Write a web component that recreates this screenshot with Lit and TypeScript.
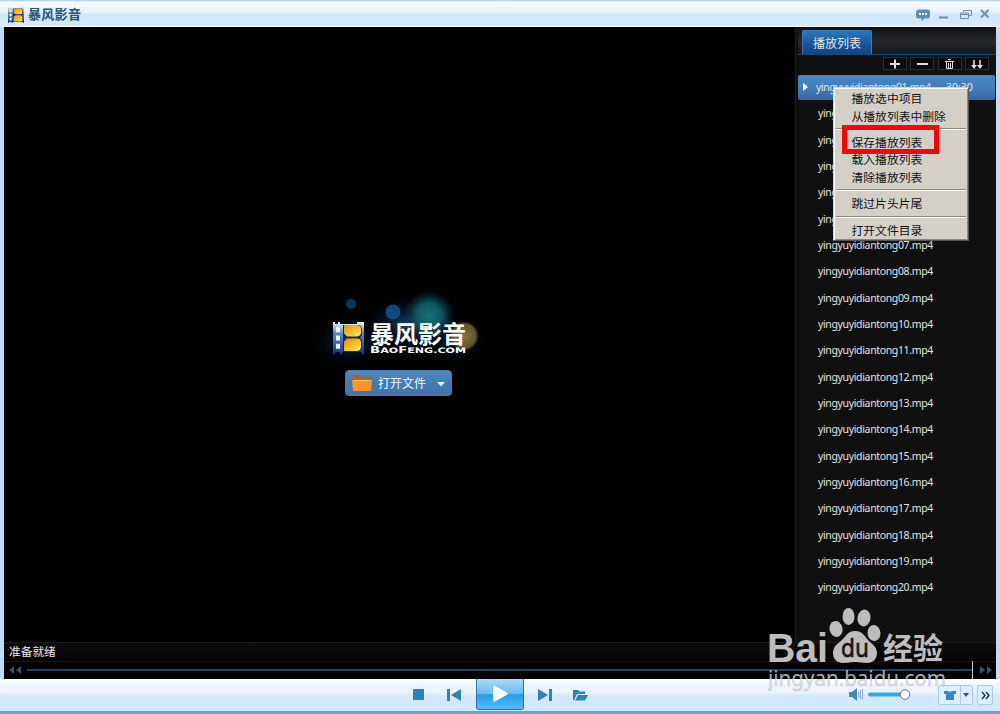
import { css, html, LitElement, svg } from "lit";
import { customElement, property } from "lit/decorators.js";

const filmLogo = svg`
  <defs>
    <linearGradient id="strip" x1="0" y1="0" x2="0" y2="1">
      <stop offset="0" stop-color="#e9f4f8" />
      <stop offset=".35" stop-color="#5b8db4" />
      <stop offset="1" stop-color="#16359a" />
    </linearGradient>
    <linearGradient id="gold" x1="0" y1="0" x2="1" y2="1">
      <stop offset="0" stop-color="#f08c0a" />
      <stop offset=".6" stop-color="#ffc629" />
      <stop offset="1" stop-color="#fff08a" />
    </linearGradient>
  </defs>
  <path d="M0 0h2v2h3V0h2v2h17V0h7v31h-2v-2H9v2H7v-2H2v2H0z" fill="url(#strip)" />
  <path d="M10 3h17l2 3v7l-2 2 2 3v8l-3 3H10z" fill="#10275e" />
  <path d="M3 5h4v5H3zM3 13h4v5H3zM3 21h4v5H3z" fill="#eef8ff" />
  <path d="M11 3h13q4 0 4 4v3q0 4-4 4H14l-3-3z" fill="url(#gold)" />
  <path d="M14 16h10q4 0 4 4v4q0 4-4 4H11v-9z" fill="url(#gold)" />
`;

@customElement("film-logo")
export class FilmLogo extends LitElement {
  render() {
    return html`<svg viewBox="0 0 31 31" preserveAspectRatio="none">
      ${filmLogo}
    </svg>`;
  }

  static styles = css`
    :host {
      display: block;
    }

    svg {
      display: block;
      width: 100%;
      height: 100%;
    }
  `;
}

@customElement("title-bar")
export class TitleBar extends LitElement {
  render() {
    return html`
      <film-logo class="logo"></film-logo>
      <span class="name">暴风影音</span>
      <svg class="controls" width="76" height="16" fill="none" stroke="#6790b5">
        <path
          d="M3 3h10q1.500 0 1.500 1.500v5q0 1.500-1.500 1.500H9l-2 2.500V11H3q-1.500 0-1.500-1.500v-5Q1.500 3 3 3z"
          fill="#5f8bb5"
        />
        <path d="M4 6h2v2H4zM7 6h2v2H7zM10 6h2v2h-2z" fill="#fff" stroke="none" />
        <path d="M24 10.500h9" stroke-width="2" />
        <path d="M48.500 5.500V3.500h8v5H54M45.500 6h8v5.500h-8zM46 7.500h7" />
        <path d="M66 3l7.500 7.500M73.500 3l-7.500 7.500" stroke-width="1.900" />
      </svg>
    `;
  }

  static styles = css`
    :host {
      display: flex;
      align-items: flex-start;
      box-sizing: border-box;
      height: 27px;
      padding: 7px 9px 0 8px;
      border-bottom: 1px solid #f6fbff;
      background: linear-gradient(#9fc8e8 0, #f7fbff 2px, #e9f3fd 12px, #cfe6fa 14px, #d5eafc 100%);
    }

    .logo {
      width: 16px;
      height: 16px;
    }

    .name {
      margin-left: 4px;
      font: bold 13px/14px "Noto Sans CJK SC", sans-serif;
      color: #245681;
      letter-spacing: 0.3px;
    }

    .controls {
      margin-left: auto;
    }
  `;
}

@customElement("video-stage")
export class VideoStage extends LitElement {
  render() {
    return html`
      <div class="brand">
        <svg class="glow" width="200" height="100">
          <defs>
            <radialGradient id="teal">
              <stop offset="0" stop-color="#167078" />
              <stop offset=".5" stop-color="#0f5560" />
              <stop offset="1" stop-color="#0a3440" stop-opacity="0" />
            </radialGradient>
            <radialGradient id="navy">
              <stop offset="0" stop-color="#0c4a98" />
              <stop offset="1" stop-color="#000" stop-opacity="0" />
            </radialGradient>
            <radialGradient id="amber">
              <stop offset="0" stop-color="#80733d" />
              <stop offset=".75" stop-color="#5e5530" />
              <stop offset="1" stop-color="#000" stop-opacity="0" />
            </radialGradient>
          </defs>
          <ellipse cx="45" cy="57" rx="42" ry="30" fill="url(#navy)" opacity=".5" />
          <ellipse cx="102" cy="40" rx="44" ry="32" fill="url(#navy)" opacity=".85" />
          <ellipse cx="150" cy="56" rx="38" ry="28" fill="url(#navy)" opacity=".4" />
          <circle cx="126" cy="31" r="26" fill="url(#teal)" />
          <circle cx="48" cy="19" r="5" fill="#0c3657" />
          <circle cx="90" cy="27" r="7.500" fill="#11487d" />
          <circle cx="161" cy="51" r="16" fill="url(#amber)" />
        </svg>
        <film-logo class="logo"></film-logo>
        <div class="words">
          <span class="cn">暴风影音</span>
          <svg class="latin" width="98" height="10">
            <text y="8" textLength="96" lengthAdjust="spacingAndGlyphs">
              B<tspan class="small">AO</tspan>F<tspan class="small">ENG.COM</tspan>
            </text>
          </svg>
        </div>
      </div>
      <div class="open">
        <svg width="21" height="18">
          <path d="M0 1h8l2 2h10v4H0z" fill="#ae6425" />
          <path d="M1 6h18l1 1-1 10H1L0 7z" fill="#f8952b" />
          <path d="M1 6.500h18" stroke="#ffbd65" />
        </svg>
        <span class="label">打开文件</span>
        <svg class="arrow" width="8" height="5"><path d="M0 0h8L4 4.500z" fill="#e5f4ff" /></svg>
      </div>
    `;
  }

  static styles = css`
    :host {
      display: flex;
      flex: 1;
      flex-direction: column;
      align-items: flex-start;
      padding: 295px 0 0 329px;
      background: #000;
      font-family: "Noto Sans CJK SC", sans-serif;
    }

    .brand {
      position: relative;
      display: flex;
      width: 136px;
      height: 35px;
    }

    .glow {
      position: absolute;
      left: -30px;
      top: -37px;
    }

    .logo {
      position: relative;
      width: 31px;
      height: 32px;
    }

    .words {
      position: relative;
      margin: 0 0 0 6px;
      color: #fff;
    }

    .cn {
      display: block;
      height: 23px;
      font-size: 24px;
      font-weight: bold;
      line-height: 21px;
      white-space: nowrap;
    }

    .latin {
      display: block;
      fill: #fff;
      font: bold 9px "DejaVu Sans", sans-serif;
    }

    .small {
      font-size: 7.500px;
    }

    .open {
      display: flex;
      align-items: center;
      box-sizing: border-box;
      width: 107px;
      height: 26px;
      margin: 13px 0 0 12px;
      padding: 0 6px;
      border: 1px solid #4b7dad;
      border-radius: 4px;
      background: linear-gradient(#5089c0, #437bb3 50%, #4674a8);
    }

    .label {
      margin-left: 5px;
      color: #f2f8ff;
      font-size: 12px;
      line-height: 20px;
    }

    .arrow {
      margin: 2px 0 0 auto;
    }
  `;
}

@customElement("play-list")
export class PlayList extends LitElement {
  @property({ type: Number })
  count = 20;

  render() {
    const names = Array.from(
      { length: this.count },
      (_, i) => `yingyuyidiantong${String(i + 1).padStart(2, "0")}.mp4`
    );
    return html`
      <div class="tabs"><div class="tab">播放列表</div></div>
      <div class="tools">
        ${[
          svg`<path d="M7 6h10M12 1.500v9" stroke-width="2" />`,
          svg`<path d="M7 6h11" stroke-width="2" />`,
          svg`<path d="M7 3.500h9M10 1.500h3M8.500 4v6.500h6V4M10.500 5v5M12.500 5v5" />`,
          svg`<path d="M9 2v7M15 2v7" stroke-width="1.600" /><path d="M6 7h6l-3 4zM12 7h6l-3 4z" fill="#ddd" stroke="none" />`,
        ].map(
          (icon) => html`<div class="tool">
            <svg width="24" height="12" fill="none" stroke="#ddd">${icon}</svg>
          </div>`
        )}
      </div>
      <div class="rows">
        ${names.map((name, i) =>
          i === 0
            ? html`<div class="row current">
                <svg width="5" height="8"><path d="M0 0l5 4-5 4z" fill="#fff" /></svg>
                <span class="file">${name}</span><span class="time">30:30</span>
              </div>`
            : html`<div class="row">${name}</div>`
        )}
      </div>
    `;
  }

  static styles = css`
    :host {
      display: flex;
      flex-direction: column;
      box-sizing: border-box;
      width: 201px;
      border-left: 1px solid #202020;
      padding-left: 2px;
      background: #101010;
      color: #e4e4e4;
    }

    .tabs {
      display: flex;
      align-items: flex-end;
      box-sizing: border-box;
      height: 28px;
      padding-left: 4px;
      border-bottom: 1px solid #174578;
      background: linear-gradient(#101114, #25272a 55%, #17181b);
    }

    .tab {
      box-sizing: border-box;
      width: 70px;
      height: 24px;
      border: 1px solid #3c78b4;
      border-bottom: 0;
      border-radius: 2px 2px 0 0;
      background: linear-gradient(#2a77bd, #135497 60%, #0d478a);
      font: 12px/23px "Noto Sans CJK SC", sans-serif;
      text-align: center;
    }

    .tools {
      display: flex;
      justify-content: flex-end;
      gap: 3.500px;
      box-sizing: border-box;
      height: 19px;
      padding: 2px 7px 0 0;
    }

    .tool {
      box-sizing: border-box;
      width: 24px;
      height: 13px;
      border: 1px solid #2d2d2d;
      background: #0b0b0b;
    }

    .tool svg {
      display: block;
      margin-left: -1px;
    }

    .rows {
      font: 10.500px "Noto Sans", sans-serif;
      letter-spacing: -0.350px;
    }

    .row {
      display: flex;
      align-items: center;
      box-sizing: border-box;
      height: 26.340px;
      padding-left: 20px;
      white-space: nowrap;
    }

    .current {
      height: 25px;
      margin: 0.700px 1px 0.600px 0;
      padding-left: 5px;
      border-radius: 2px;
      background: linear-gradient(#4286c4, #427fba 50%, #3468a2);
    }

    .file {
      margin-left: 8px;
    }

    .time {
      margin-left: 15px;
      letter-spacing: 0;
    }
  `;
}

@customElement("context-menu")
export class ContextMenu extends LitElement {
  render() {
    const groups = [
      ["播放选中项目", "从播放列表中删除"],
      ["保存播放列表", "载入播放列表", "清除播放列表"],
      ["跳过片头片尾"],
      ["打开文件目录"],
    ];
    return html`
      ${groups.map(
        (group) => html`<div class="group">
          ${group.map((label) => html`<div class="item">${label}</div>`)}
        </div>`
      )}
      <div class="mark"></div>
    `;
  }

  static styles = css`
    :host {
      display: block;
      box-sizing: border-box;
      width: 136px;
      height: 154px;
      padding: 1px 2px;
      border: 1px solid #d4d0c8;
      border-right-color: #555;
      border-bottom-color: #555;
      background: #d4d0c8;
      box-shadow: inset 1px 1px #fff, inset -1px -1px #8b8882;
      color: #111;
      font: 11.800px/17.600px "Noto Sans CJK SC", sans-serif;
    }

    .group + .group {
      margin-top: 3.700px;
      padding-top: 4px;
      border-top: 1px solid #8b8882;
      box-shadow: inset 0 1px #fff;
    }

    .item {
      height: 17.600px;
      padding-left: 15.500px;
      white-space: nowrap;
    }

    .mark {
      position: absolute;
      left: 8px;
      top: 37px;
      box-sizing: border-box;
      width: 97px;
      height: 29px;
      border: 5px solid #f00;
    }
  `;
}

@customElement("status-area")
export class StatusArea extends LitElement {
  render() {
    return html`
      <div class="status">准备就绪</div>
      <div class="seek">
        <svg width="12" height="8"><path d="M5 0v8L0 4zM12 0v8L7 4z" /></svg>
        <div class="track"></div>
        <svg width="12" height="8"><path d="M0 0l5 4-5 4zM7 0l5 4-5 4z" /></svg>
      </div>
    `;
  }

  static styles = css`
    :host {
      display: block;
      height: 37px;
      background: #000;
    }

    .status {
      box-sizing: border-box;
      height: 20px;
      padding-left: 5px;
      border-top: 1px solid #1c1c1c;
      border-bottom: 1px solid #171717;
      background: linear-gradient(#0d0d0d, #030303);
      color: #e8e8e8;
      font: 11.700px/16px "Noto Sans CJK SC", sans-serif;
    }

    .seek {
      display: flex;
      align-items: center;
      height: 16px;
      padding: 0 4px 0 5px;
      fill: #34516c;
    }

    .track {
      flex: 1;
      height: 2px;
      margin: 0 8px 0 6px;
      background: #29405a;
    }
  `;
}

@customElement("control-bar")
export class ControlBar extends LitElement {
  render() {
    return html`
      <div class="transport">
        <svg width="12" height="12"><path d="M0 0h11v11H0z" /></svg>
        <svg width="15" height="14"><path d="M0 1h3v12H0zM14 1v12L4 7z" /></svg>
        <div class="play">
          <svg width="16" height="18"><path d="M1 1.500Q1 0 2.500.8l12.500 7q1 1 0 2l-12.500 7Q1 17.500 1 16z" fill="#fff" /></svg>
        </div>
        <svg width="15" height="14"><path d="M0 1l10 6-10 6zM11 1h3v12h-3z" /></svg>
        <svg width="15" height="12">
          <path d="M0 1h5l1.500 1.500H12V5H4l-3 6H0zM5 6h10l-3 5.500H2z" />
        </svg>
      </div>
      <svg class="volume" width="64" height="16">
        <path d="M0 5h3l5-4v13l-5-4H0z" fill="#4588bc" />
        <path d="M9.500 5v5M11.500 3v9M13.500 2v11" stroke="#8bafd0" />
        <path d="M21 7.500h33" stroke="#3aa5e8" stroke-width="4" stroke-linecap="round" />
        <circle cx="56" cy="7.500" r="4.800" fill="#fff" stroke="#667582" />
      </svg>
      <div class="skin">
        <svg width="12" height="9"><path d="M0 0h4q2 1.500 4 0h4v3h-2v6H2V3H0z" fill="#3887c1" /></svg>
        <div class="drop">
          <svg width="6" height="4"><path d="M0 0h6L3 4z" fill="#344f72" /></svg>
        </div>
      </div>
      <div class="more">
        <svg width="9" height="9" fill="none" stroke="#203952" stroke-width="1.500">
          <path d="M1 1l3 3.500-3 3.500M5 1l3 3.500-3 3.500" />
        </svg>
      </div>
    `;
  }

  static styles = css`
    :host {
      display: grid;
      grid-template-columns: 1fr auto auto auto;
      align-items: center;
      box-sizing: border-box;
      height: 32px;
      padding-right: 7px;
      background: linear-gradient(#fff 0, #edf4fe 7px, #e8f2fe 14px, #d3e8fe 17px, #d0e8ff 100%);
    }

    .transport {
      display: flex;
      align-items: center;
      height: 32px;
      padding-left: 413px;
      fill: #2b83bd;
    }

    .transport > svg:nth-child(2) {
      margin: 0 14px 0 22px;
    }

    .play {
      display: flex;
      align-items: center;
      justify-content: center;
      box-sizing: border-box;
      width: 48px;
      height: 31px;
      margin-bottom: 1px;
      border: 1px solid #2b75af;
      border-top: 0;
      border-radius: 0 0 3px 3px;
      background: linear-gradient(#a7dcfb, #69bced 50%, #299be6 52%, #54bcfb);
    }

    .play + svg {
      margin: 0 20px 0 14px;
    }

    .volume {
      margin-right: 25px;
    }

    .skin,
    .more {
      display: flex;
      align-items: center;
      box-sizing: border-box;
      height: 20px;
      border: 1px solid #a9cdea;
      border-radius: 2px;
      background: #dceeff;
    }

    .skin {
      width: 35px;
      padding-left: 5px;
    }

    .drop {
      display: flex;
      align-items: center;
      justify-content: center;
      width: 12px;
      height: 18px;
      margin-left: 4px;
      border-left: 1px solid #a9cdea;
    }

    .more {
      justify-content: center;
      width: 16px;
      margin-left: 4px;
    }
  `;
}

@customElement("baidu-watermark")
export class BaiduWatermark extends LitElement {
  render() {
    return html`<svg width="200" height="90">
      <g fill="#bdbdbd">
        <text class="bai" x="-1" y="57" textLength="61" lengthAdjust="spacingAndGlyphs">Bai</text>
        <ellipse cx="68" cy="24" rx="6.500" ry="8" transform="rotate(-12 68 24)" />
        <ellipse cx="80.500" cy="11.500" rx="6" ry="8.500" />
        <ellipse cx="96" cy="13" rx="6.500" ry="8.500" transform="rotate(10 96 13)" />
        <ellipse cx="106" cy="28" rx="6.500" ry="8" transform="rotate(-5 106 28)" />
        <path
          d="M87 26c-7 0-9 5-13 9-5 4-9 7-9 13 0 6 4 10 10 10 5 0 8-1 12-1s8 1 12 1c6 0 10-4 10-10 0-6-5-9-9-13-4-5-6-9-13-9z"
        />
        <text class="du" x="73" y="52" textLength="28" lengthAdjust="spacingAndGlyphs">du</text>
        <text class="cn" x="115" y="54" textLength="60" lengthAdjust="spacingAndGlyphs">经验</text>
      </g>
      <text class="url" x="0" y="81" textLength="178" lengthAdjust="spacingAndGlyphs">
        jingyan.baidu.com
      </text>
    </svg>`;
  }

  static styles = css`
    svg {
      display: block;
    }

    .bai {
      font: bold 40px "Liberation Sans", sans-serif;
    }

    .du {
      fill: #151515;
      font: 24px "DejaVu Sans", sans-serif;
      stroke: #151515;
      stroke-width: 0.6px;
    }

    .cn {
      font: bold 30px "Noto Sans CJK SC", sans-serif;
    }

    .url {
      fill: #ddd;
      fill-opacity: 0.8;
      stroke: #777;
      stroke-opacity: 0.35;
      stroke-width: 0.5px;
      font: 21px "Noto Sans", sans-serif;
    }
  `;
}

@customElement("app-root")
export class AppRoot extends LitElement {
  render() {
    return html`
      <title-bar></title-bar>
      <div class="body">
        <div class="main">
          <video-stage></video-stage>
          <play-list .count=${20}></play-list>
        </div>
        <status-area></status-area>
      </div>
      <control-bar></control-bar>
      <context-menu class="menu"></context-menu>
      <div class="caret"></div>
      <baidu-watermark class="watermark"></baidu-watermark>
    `;
  }

  static styles = css`
    :host {
      position: relative;
      display: flex;
      flex-direction: column;
      box-sizing: border-box;
      width: 1000px;
      height: 714px;
      overflow: hidden;
      border-bottom: 3px solid #6ba1d4;
      background: #d0e8ff;
    }

    .body {
      display: flex;
      flex: 1;
      flex-direction: column;
      border: solid #bfdcf4;
      border-width: 0 4px;
    }

    .main {
      display: flex;
      flex: 1;
    }

    .menu {
      position: absolute;
      left: 833px;
      top: 87px;
    }

    .caret {
      position: absolute;
      left: 972px;
      top: 661px;
      width: 1px;
      height: 18px;
      background: #ccc;
    }

    .watermark {
      position: absolute;
      left: 768px;
      top: 605px;
    }
  `;
}

declare global {
  interface HTMLElementTagNameMap {
    "app-root": AppRoot;
  }
}
